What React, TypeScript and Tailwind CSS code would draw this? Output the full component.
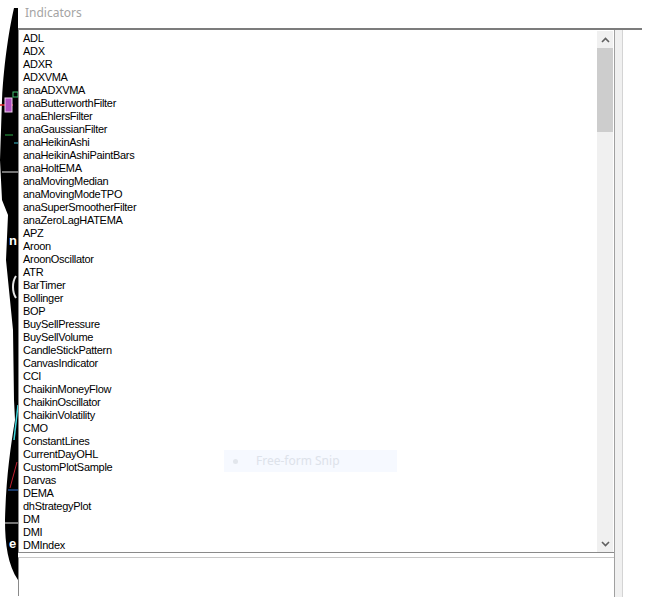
import React from "react";

const INDICATORS: string[] = [
  "ADL",
  "ADX",
  "ADXR",
  "ADXVMA",
  "anaADXVMA",
  "anaButterworthFilter",
  "anaEhlersFilter",
  "anaGaussianFilter",
  "anaHeikinAshi",
  "anaHeikinAshiPaintBars",
  "anaHoltEMA",
  "anaMovingMedian",
  "anaMovingModeTPO",
  "anaSuperSmootherFilter",
  "anaZeroLagHATEMA",
  "APZ",
  "Aroon",
  "AroonOscillator",
  "ATR",
  "BarTimer",
  "Bollinger",
  "BOP",
  "BuySellPressure",
  "BuySellVolume",
  "CandleStickPattern",
  "CanvasIndicator",
  "CCI",
  "ChaikinMoneyFlow",
  "ChaikinOscillator",
  "ChaikinVolatility",
  "CMO",
  "ConstantLines",
  "CurrentDayOHL",
  "CustomPlotSample",
  "Darvas",
  "DEMA",
  "dhStrategyPlot",
  "DM",
  "DMI",
  "DMIndex",
];

// sliver of the chart window behind the dialog
const ChartEdge = (): JSX.Element => (
  <svg width="18" height="615" viewBox="0 0 18 615" className="block">
    <path
      d="M14,8 C10,25 4,60 2,100 L0,160 L2,200 L8,215 L6,260 L10,300 L13,330 L14,400 L15,420 C10,450 6,480 5,520 C5,545 8,565 18,580 L18,8 Z"
      fill="#000"
    />
    <rect x="13" y="92" width="5" height="5" fill="none" stroke="#3fbf6f" strokeWidth="1" />
    <line x1="0" y1="105" x2="13" y2="105" stroke="#e0202a" strokeWidth="1.5" />
    <rect x="5" y="98" width="7" height="14" fill="#b04fc0" stroke="#f0d0f0" strokeWidth="1" />
    <line x1="5" y1="135" x2="13" y2="135" stroke="#2fae4a" strokeWidth="1" />
    <line x1="14" y1="143" x2="18" y2="143" stroke="#3cc0d0" strokeWidth="1" />
    <line x1="2" y1="172" x2="18" y2="172" stroke="#e8e8e8" strokeWidth="1" />
    <text x="9" y="245" fill="#fff" fontSize="13" fontFamily="Liberation Sans, sans-serif" fontWeight="bold">
      n
    </text>
    <path d="M16,276 C12,282 12,292 16,298" stroke="#e8e8e8" strokeWidth="2" fill="none" />
    <line x1="18" y1="405" x2="14" y2="440" stroke="#40d8e0" strokeWidth="1.5" />
    <line x1="17" y1="462" x2="10" y2="488" stroke="#c02030" strokeWidth="1" />
    <line x1="8" y1="490" x2="18" y2="490" stroke="#3070d0" strokeWidth="1" />
    <line x1="5" y1="523" x2="18" y2="523" stroke="#e8e8e8" strokeWidth="1" />
    <text x="9" y="548" fill="#fff" fontSize="13" fontFamily="Liberation Sans, sans-serif" fontWeight="bold">
      e
    </text>
  </svg>
);

const Chevron = ({ up }: { up: boolean }): JSX.Element => (
  <svg width="9" height="6" viewBox="0 0 9 6">
    <path d={up ? "M1,5 L4.5,1.5 L8,5" : "M1,1 L4.5,4.5 L8,1"} stroke="#606060" strokeWidth="1.6" fill="none" />
  </svg>
);

const ScrollBar = (): JSX.Element => (
  <div className="flex w-[16px] flex-col bg-[#f0f0f0]">
    <div className="flex h-[17px] items-center justify-center">
      <Chevron up />
    </div>
    <div className="h-[84px] bg-[#cdcdcd]" />
    <div className="flex-1" />
    <div className="flex h-[17px] items-center justify-center">
      <Chevron up={false} />
    </div>
  </div>
);

const App = (): JSX.Element => {
  return (
    <div className="relative flex h-[615px] w-[672px] overflow-hidden bg-white">
      <ChartEdge />

      <div className="flex w-[624px] flex-col">
        <div className="flex h-[28px] items-center pl-[7px] pb-[2px] font-['Noto_Sans',sans-serif] text-[12px] text-[#a4a4a4]">
          Indicators
        </div>
        <div className="h-[2px] bg-[#7c7c7c]" />

        <div className="flex h-[567px]">
          <div className="flex w-[596px] flex-col">
            {/* indicator list */}
            <div className="flex h-[523px] border-b border-l border-[#8a8a8a] pr-[1px]">
              <ul className="flex-1 pl-[4px] pt-[2px] font-['Liberation_Sans',Arial,sans-serif] text-[11px] leading-[13px] tracking-[-0.3px] text-black">
                {INDICATORS.map((name: string) => (
                  <li key={name} className="h-[13px] whitespace-nowrap">
                    {name}
                  </li>
                ))}
              </ul>
              <div className="flex pt-[1px]">
                <ScrollBar />
              </div>
            </div>

            {/* description box */}
            <div className="mt-[4px] h-[39px] border-l border-t border-[#c8c8c8] border-l-[#8a8a8a]" />
          </div>

          <div className="h-[567px] w-[9px] border-l border-r border-l-[#a0a0a0] border-r-[#d4d4d4] bg-[#f0f0f0]" />
        </div>
      </div>

      {/* snipping tool hint */}
      <div className="absolute left-[224px] top-[450px] flex h-[22px] w-[173px] items-center bg-[#f6f9ff]">
        <span className="ml-[9px] h-[5px] w-[5px] rounded-full bg-[#e2e6ec]" />
        <span className="ml-[18px] font-['Noto_Sans',sans-serif] text-[12px] text-[#dde2ea]">Free-form Snip</span>
      </div>
    </div>
  );
};

export default App;
